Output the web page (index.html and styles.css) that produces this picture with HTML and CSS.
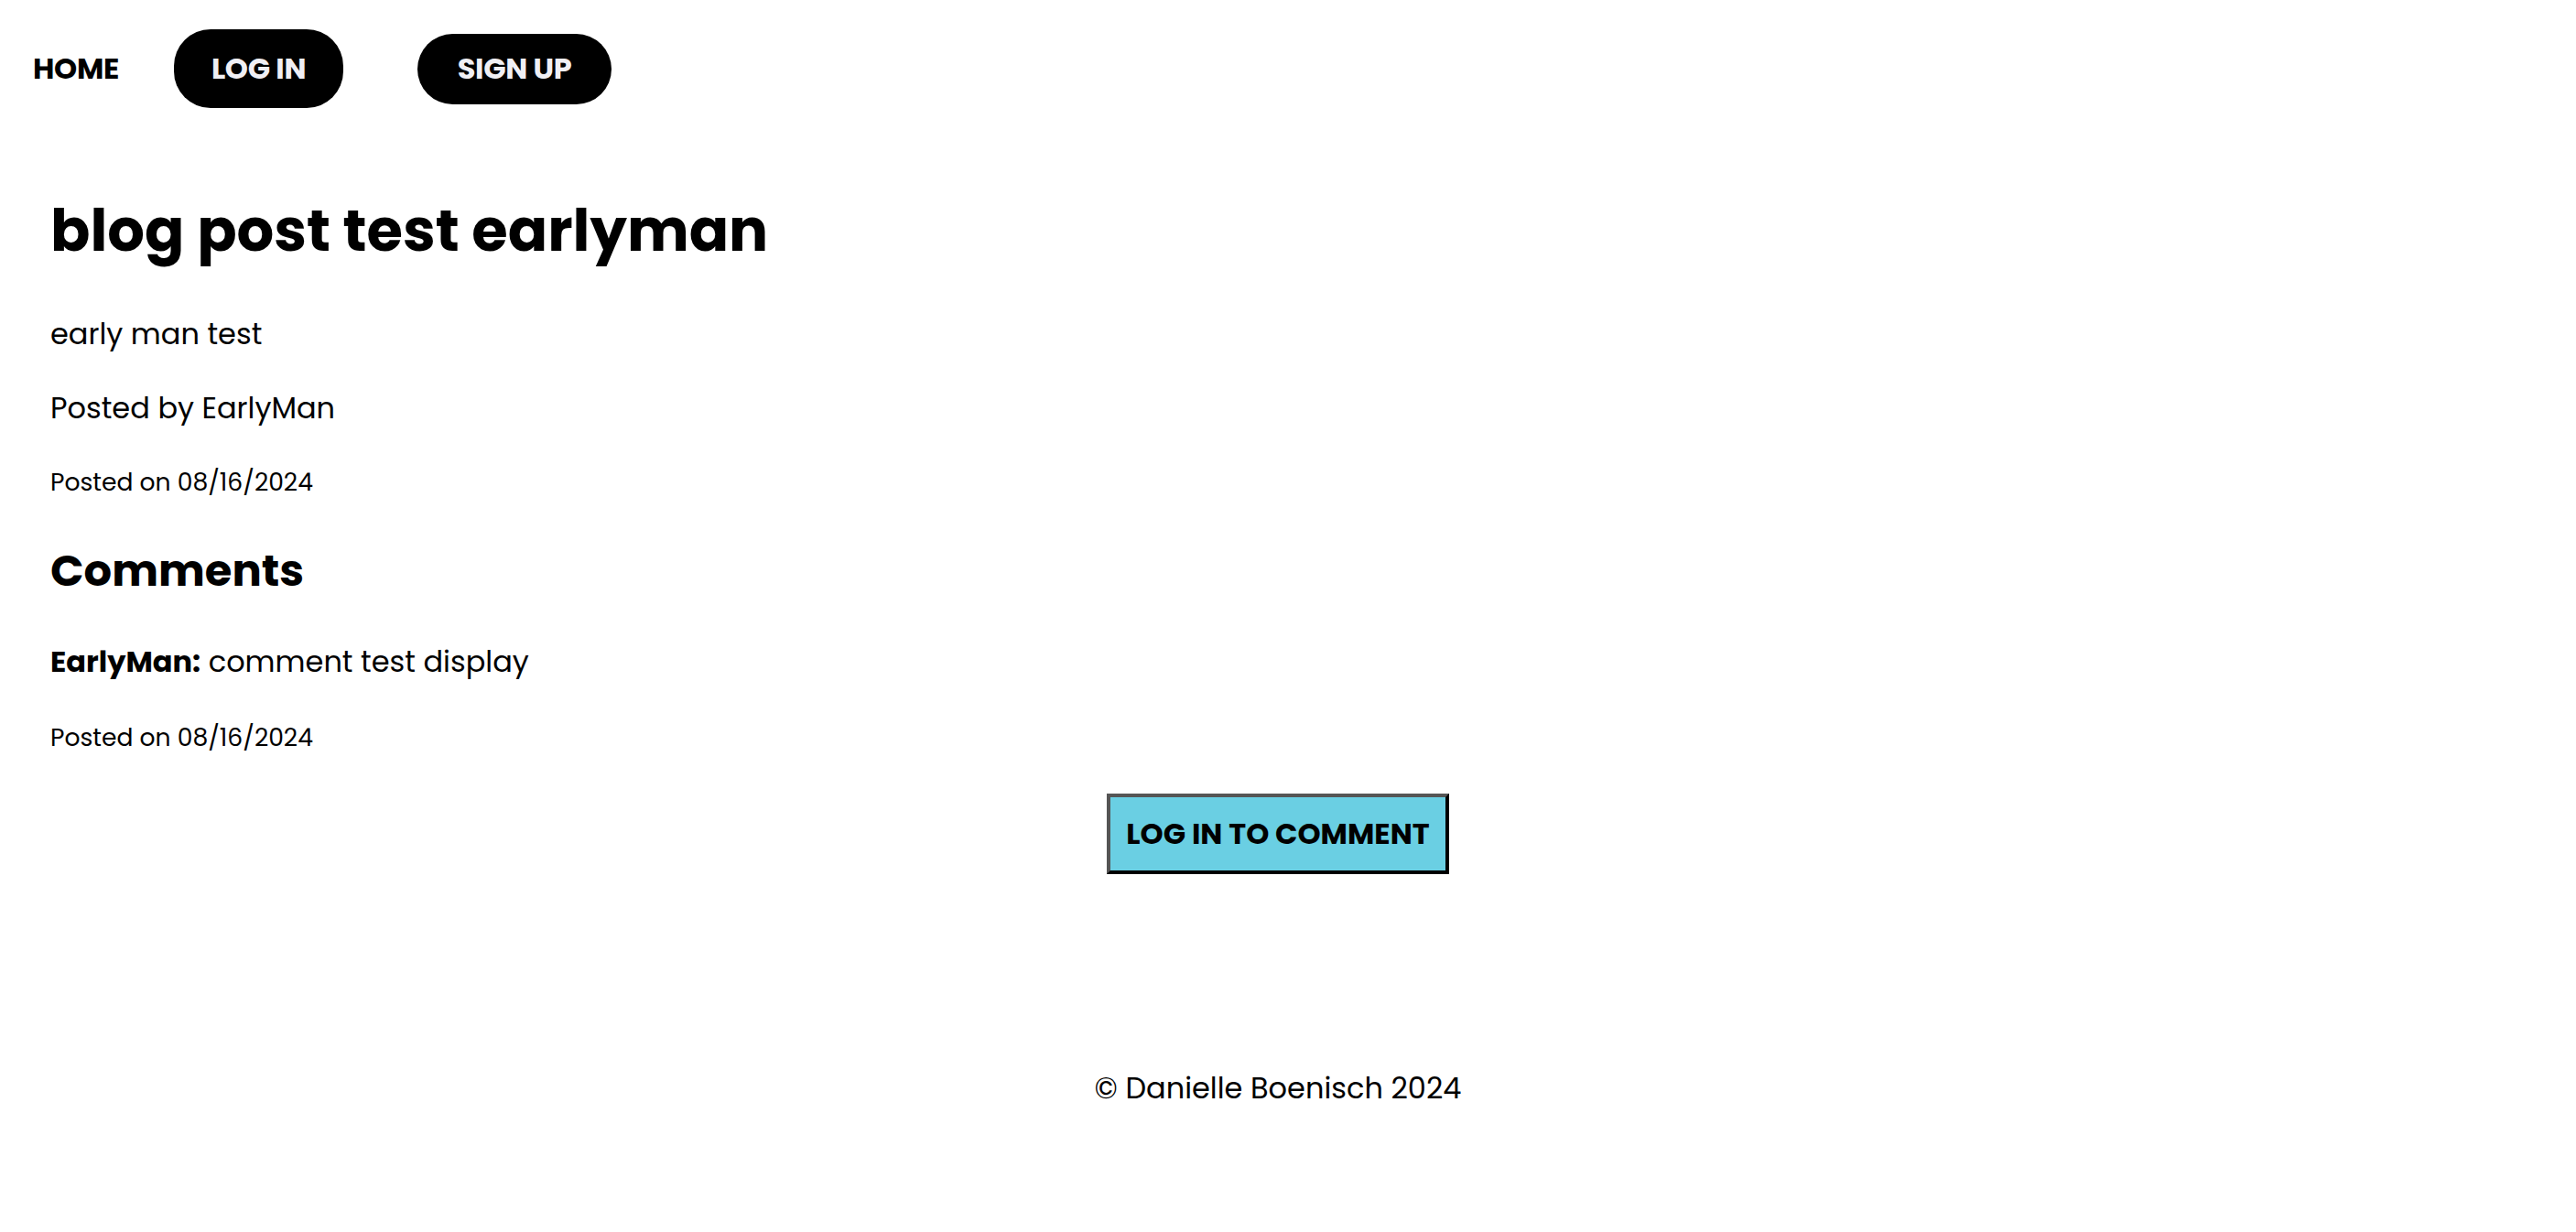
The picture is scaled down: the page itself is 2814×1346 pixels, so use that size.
FILE: index.html
```html
<!DOCTYPE html>
<html lang="en">
<head>
<meta charset="utf-8">
<title>blog post test earlyman</title>
<link rel="stylesheet" href="styles.css">
</head>
<body>
<header class="site-header">
  <nav class="nav">
    <a class="nav-link" href="#">HOME</a>
    <a class="nav-pill nav-pill-login" href="#">LOG IN</a>
    <a class="nav-pill nav-pill-signup" href="#">SIGN UP</a>
  </nav>
</header>
<main class="post">
  <h1 class="post-title">blog post test earlyman</h1>
  <p class="post-body">early man test</p>
  <p class="post-author">Posted by EarlyMan</p>
  <p class="post-date">Posted on 08/16/2024</p>
  <h2 class="comments-title">Comments</h2>
  <div class="comment">
    <p class="comment-text"><strong>EarlyMan:</strong> comment test display</p>
    <p class="comment-date">Posted on 08/16/2024</p>
  </div>
  <div class="cta-row">
    <a class="cta" href="#">LOG IN TO COMMENT</a>
  </div>
</main>
<footer class="site-footer">
  <p class="copyright">© Danielle Boenisch 2024</p>
</footer>
</body>
</html>
```
FILE: styles.css
```css
html, body {
  margin: 0;
  padding: 0;
  background: #ffffff;
}

body {
  font-family: "Poppins", "Inter", "Open Sans", sans-serif;
  color: #000000;
}

a {
  text-decoration: none;
}

.site-header {
  padding: 32px 0 0 36px;
}

.nav {
  display: flex;
  align-items: center;
  height: 86px;
}

.nav-link {
  color: #000;
  font-weight: 700;
  font-size: 32px;
  letter-spacing: -0.3px;
  line-height: 40px;
  margin-right: 60px;
}

.nav-pill {
  display: flex;
  align-items: center;
  justify-content: center;
  background: #000;
  color: #f0eff4;
  font-weight: 700;
  font-size: 32px;
  letter-spacing: -0.3px;
  border-radius: 40px;
  box-sizing: border-box;
}

.nav-pill-login {
  width: 185px;
  height: 86px;
  margin-right: 81px;
}

.nav-pill-signup {
  width: 212px;
  height: 77px;
}

.post {
  padding: 0 0 0 55px;
}

.post-title {
  margin: 89px 0 0;
  font-size: 64px;
  line-height: 90px;
  font-weight: 700;
}

.post-body {
  margin: 44px 0 0;
  font-size: 32px;
  line-height: 48px;
}

.post-author {
  margin: 33px 0 0;
  font-size: 32px;
  line-height: 48px;
}

.post-date {
  margin: 37px 0 0;
  font-size: 26.6px;
  line-height: 40px;
}

.comments-title {
  margin: 44px 0 0;
  font-size: 48px;
  line-height: 66px;
  font-weight: 700;
}

.comment-text {
  margin: 42px 0 0;
  font-size: 32px;
  line-height: 48px;
}

.comment-text strong {
  font-weight: 700;
}

.comment-date {
  margin: 39px 0 0;
  font-size: 26.6px;
  line-height: 40px;
}

.cta-row {
  display: flex;
  justify-content: center;
  margin: 41px 0 0 -55px;
  padding-right: 22px;
}

.cta {
  display: block;
  background: #6acfe3;
  color: #000;
  font-weight: 700;
  font-size: 32px;
  line-height: 48px;
  padding: 16px 17px;
  border-style: solid;
  border-width: 4px;
  border-color: #555555 #000000 #000000 #555555;
}

.site-footer {
  display: flex;
  justify-content: center;
  padding-right: 22px;
  margin-top: 210px;
}

.copyright {
  margin: 0;
  font-size: 32px;
  line-height: 48px;
}
```
